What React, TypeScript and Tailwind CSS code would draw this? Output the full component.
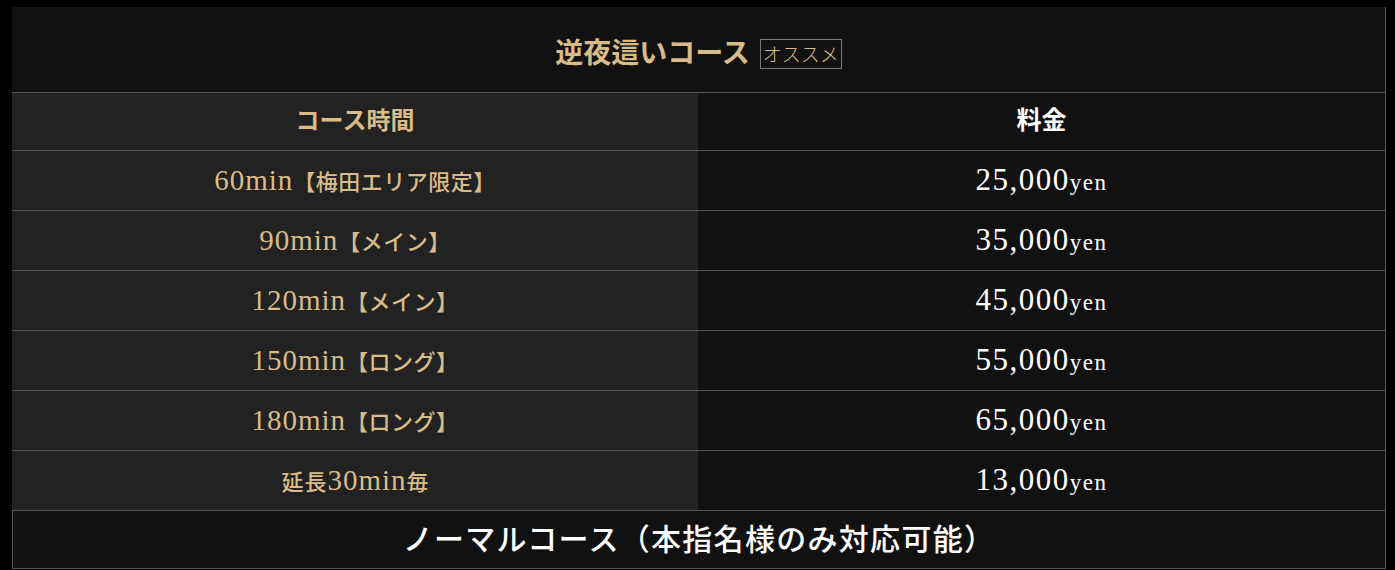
const rows = [
  { time: "60", note: "【梅田エリア限定】", price: "25,000" },
  { time: "90", note: "【メイン】", price: "35,000" },
  { time: "120", note: "【メイン】", price: "45,000" },
  { time: "150", note: "【ロング】", price: "55,000" },
  { time: "180", note: "【ロング】", price: "65,000" },
];

const jp = "font-['Noto_Sans_CJK_JP',sans-serif]";
const serif = "font-['Liberation_Serif','Noto_Serif_CJK_JP','Noto_Sans_CJK_JP',serif]";

export default function App() {
  return (
    <div className="min-h-screen bg-black pt-[7px] px-3">
      <div className="w-[1374px] border-r border-[#555] bg-[#111]">
        <div className={`h-[85px] flex items-center justify-center gap-[10px] ${jp}`}>
          <span className="mt-[2px] text-[28px] font-bold text-[#d8bb88]">逆夜這いコース</span>
          <span className="mt-[8px] border border-[#777] px-[2px] text-[19px] leading-[28px] font-light text-[#d8bb88]">オススメ</span>
        </div>
        <div className="grid grid-cols-[686px_1fr] border-t border-[#555]">
          <div className={`h-[57px] flex items-center justify-center pb-[5px] bg-[#222] text-[24px] font-bold text-[#d8bb88] ${jp}`}>
            コース時間
          </div>
          <div className={`h-[57px] flex items-center justify-center pb-[5px] text-[25px] font-bold text-white ${jp}`}>
            料金
          </div>
          {rows.map((r) => (
            <Row key={r.time} left={
              <>
                <span className={`${serif} text-[29px] tracking-[1px]`}>{r.time}min</span>
                <span className={`${jp} text-[22px] font-medium tracking-[0.5px]`}>{r.note}</span>
              </>
            } price={r.price} />
          ))}
          <Row left={
            <>
              <span className={`${jp} text-[22px] font-medium tracking-[1px]`}>延長</span>
              <span className={`${serif} text-[29px] tracking-[1px]`}>30min</span>
              <span className={`${jp} text-[22px] font-medium`}>毎</span>
            </>
          } price="13,000" />
        </div>
      </div>
      <div className={`w-[1374px] h-[59px] border border-[#555] bg-[#111] flex items-center justify-center pb-[4px] text-[30px] font-medium text-white tracking-[1.3px] ${jp}`}>
        ノーマルコース（本指名様のみ対応可能）
      </div>
    </div>
  );
}

function Row({ left, price }: { left: React.ReactNode; price: string }) {
  return (
    <>
      <div className="h-[60px] border-t border-[#555] bg-[#222] flex items-center justify-center text-[#d8bb88]">
        <div className="flex items-baseline">{left}</div>
      </div>
      <div className="h-[60px] border-t border-[#555] flex items-center justify-center text-white">
        <div className={`flex items-baseline ${serif}`}>
          <span className="text-[31px] tracking-[1.5px]">{price}</span>
          <span className="text-[23px] tracking-[1.5px]">yen</span>
        </div>
      </div>
    </>
  );
}
